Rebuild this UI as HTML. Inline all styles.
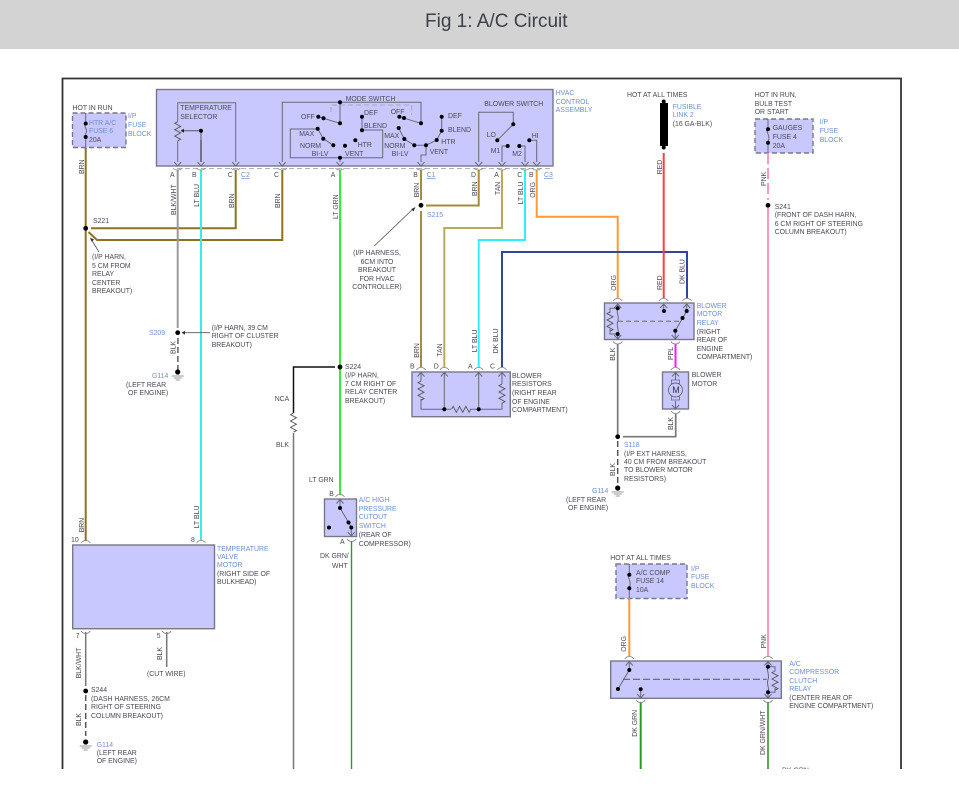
<!DOCTYPE html>
<html><head><meta charset="utf-8"><title>Fig 1: A/C Circuit</title>
<style>
html,body{margin:0;padding:0;background:#fff;width:959px;height:795px;overflow:hidden}
svg{display:block;position:absolute;left:0;top:0}
text{font-family:"Liberation Sans",sans-serif;font-size:6.9px;fill:#4a4a5a}
.b{fill:#6f8fd0}
.t{font-size:19px;fill:#3c4048}
.u{text-decoration:underline}
.box{fill:#c8c8ff;stroke:#77778a;stroke-width:1.4}
.dbox{fill:#c8c8ff;stroke:#77778a;stroke-width:1.4;stroke-dasharray:5 3}
.w{fill:none;stroke-width:2}
.in{fill:none;stroke:#68687a;stroke-width:1}
.cap{fill:none;stroke:#808088;stroke-width:.8}
.thin{fill:none;stroke:#555;stroke-width:.8}
</style></head><body>
<svg width="959" height="795" viewBox="0 0 959 795" xmlns="http://www.w3.org/2000/svg">
<defs>
<g id="cd"><path d="M-4.5 168Q-3.5 170 0 170Q3.5 170 4.5 168" class="cap"/></g>
<g id="cu"><path d="M-4.5 3Q-3 .5 0 .5Q3 .5 4.5 3" class="cap"/></g>
<g id="cb"><path d="M-4.5 0Q-3 2.5 0 2.5Q3 2.5 4.5 0" class="cap"/></g>
<g id="ad"><path d="M-3.5 -4L0 0L3.5 -4" class="in"/></g>
<g id="au"><path d="M-3.5 4L0 0L3.5 4" class="in"/></g>
<path id="zv" d="M0 0l-3 1.6 6 3.2-6 3.2 6 3.2-6 3.2 6 3.2-3 1.6" fill="none" stroke="#555" stroke-width=".9"/>
<path id="zh" d="M0 0l1.6-3 3.2 6 3.2-6 3.2 6 3.2-6 3.2 6 1.6-3" fill="none" stroke="#555" stroke-width=".9"/>
<circle id="d" r="2" fill="#000"/>
<g id="gnd"><circle r="2.6" fill="#000"/><path d="M-6 4H6M-4 6H4M-2 8H2" stroke="#777" stroke-width=".8"/></g>
</defs>

<rect x="0" y="0" width="959" height="49" fill="#d3d3d3"/>
<text x="425" y="27" class="t">Fig 1: A/C Circuit</text>

<path d="M62.5 769V78.5H901V769" fill="none" stroke="#333" stroke-width="1.8"/>

<!-- boxes -->
<rect x="156.5" y="89.5" width="396.5" height="76.5" class="box"/>
<rect x="72.5" y="113" width="53.5" height="34.5" class="dbox"/>
<rect x="755" y="119" width="58" height="34" class="dbox"/>
<rect x="616" y="564" width="71" height="34.5" class="dbox"/>
<rect x="604.5" y="303" width="89.5" height="36.5" class="box"/>
<rect x="662.5" y="372" width="26" height="37" class="box"/>
<rect x="412" y="372" width="98.3" height="44.7" class="box"/>
<rect x="324.5" y="499" width="32" height="37.5" class="box"/>
<rect x="72.7" y="545" width="141.8" height="83.7" class="box"/>
<rect x="610.7" y="661" width="170.6" height="37.3" class="box"/>

<!-- wires -->
<g class="w">
<path d="M85.7 147.5V541" stroke="#8f7120" fill="none" stroke-width="2"/>
<path d="M91 228.3H235.7V170" stroke="#8f7120" fill="none" stroke-width="2"/>
<path d="M88.5 232L97 240H282.3V170" stroke="#8f7120" fill="none" stroke-width="2"/>
<path d="M177.7 170V328" stroke="#9a9a9a" fill="none" stroke-width="2"/>
<path d="M177.9 338V370" stroke="#555" fill="none" stroke-width="1.4" stroke-dasharray="6 3"/>
<path d="M201 170V540" stroke="#33eeee" fill="none" stroke-width="2"/>
<path d="M340 170V495" stroke="#33ee33" fill="none" stroke-width="2"/>
<path d="M335 367H293.5V413" stroke="#111" fill="none" stroke-width="1.5"/>
<path d="M293.5 433V769" stroke="#777" fill="none" stroke-width="1.5"/>
<path d="M351.5 541V769" stroke="#2a9a2a" fill="none" stroke-width="1.4"/>
<path d="M421 170V200M421 211V367" stroke="#a58c3c" fill="none" stroke-width="2"/>
<path d="M426 205.5H478.7V170" stroke="#a58c3c" fill="none" stroke-width="2"/>
<path d="M502 170V228H444.3V367" stroke="#b8a860" fill="none" stroke-width="2"/>
<path d="M525 170V240H478.7V367" stroke="#33eeff" fill="none" stroke-width="2"/>
<path d="M536.7 170V216.7H617.7V298" stroke="#ff9933" fill="none" stroke-width="2"/>
<path d="M502 367V252H687V298" stroke="#33459a" fill="none" stroke-width="2"/>
<path d="M663.7 153V298" stroke="#ff4040" fill="none" stroke-width="2"/>
<path d="M768 153V200" stroke="#ff99bb" fill="none" stroke-width="2" stroke-dasharray="11 4"/>
<path d="M768 208V656" stroke="#ff99bb" fill="none" stroke-width="2"/>
<path d="M617.7 344V434" stroke="#777" fill="none" stroke-width="1.7"/>
<path d="M617.7 441V486" stroke="#555" fill="none" stroke-width="1.5" stroke-dasharray="6 3"/>
<path d="M623 436.7H675.7V414" stroke="#777" fill="none" stroke-width="1.7"/>
<path d="M675.5 344V367" stroke="#ee22ee" fill="none" stroke-width="2"/>
<path d="M629.3 598.5V656" stroke="#ff9933" fill="none" stroke-width="2"/>
<path d="M640.7 702V769" stroke="#2a9a2a" fill="none" stroke-width="2"/>
<path d="M768 702V769" stroke="#2a9a2a" fill="none" stroke-width="1.6"/>
<path d="M85.7 632V686" stroke="#777" fill="none" stroke-width="1.5"/>
<path d="M85.7 695V736" stroke="#555" fill="none" stroke-width="1.5" stroke-dasharray="6 3"/>
<path d="M166.7 632V667" stroke="#777" fill="none" stroke-width="1.5"/>
</g>
<use href="#zv" x="293.5" y="413"/>
<rect x="660" y="103" width="8" height="43" fill="#000"/>
<use href="#d" x="663.7" y="101.5"/><use href="#d" x="663.7" y="147.5"/>

<!-- splices -->
<circle cx="85.7" cy="228.3" r="2.4" fill="#000"/>
<circle cx="421" cy="205.3" r="2.4" fill="#000"/>
<circle cx="768" cy="205.3" r="2.4" fill="#000"/>
<circle cx="177.7" cy="332.7" r="2.4" fill="#000"/>
<circle cx="340" cy="367" r="2.4" fill="#000"/>
<circle cx="617.7" cy="436.7" r="2.4" fill="#000"/>
<circle cx="85.7" cy="691" r="2.4" fill="#000"/>
<use href="#gnd" x="177.7" y="372"/>
<use href="#gnd" x="617.7" y="488"/>
<use href="#gnd" x="85.7" y="742"/>

<!-- leader arrows -->
<path d="M99 252L91 239" class="thin"/><path d="M90 237.5l4.2 2.2-2.8 1.8z" fill="#333"/>
<path d="M374.3 246L414 208" class="thin"/><path d="M415.5 207l-2 4.5-2.3-2.4z" fill="#333"/>
<path d="M210 332.7H184" class="thin"/><path d="M181.5 332.7l3.5-2v4z" fill="#333"/>

<!-- connector row -->
<path d="M177 168.5H553" stroke="#999" stroke-width=".8" stroke-dasharray="5 3" fill="none"/>
<g>
<use href="#cd" x="177.7"/><use href="#cd" x="201"/><use href="#cd" x="235.7"/><use href="#cd" x="282.3"/><use href="#cd" x="340"/><use href="#cd" x="421"/><use href="#cd" x="478.7"/><use href="#cd" x="502"/><use href="#cd" x="525"/><use href="#cd" x="536.7"/>
<use href="#ad" x="177.7" y="166"/><use href="#ad" x="201" y="166"/><use href="#ad" x="235.7" y="166"/><use href="#ad" x="282.3" y="166"/><use href="#ad" x="340" y="166"/><use href="#ad" x="421" y="166"/><use href="#ad" x="478.7" y="166"/><use href="#ad" x="502" y="166"/><use href="#ad" x="525" y="166"/><use href="#ad" x="536.7" y="166"/>
<!-- top caps -->
<use href="#cu" x="85.7" y="540"/><use href="#cu" x="201" y="540"/><use href="#cu" x="340" y="494"/>
<use href="#cu" x="421" y="367"/><use href="#cu" x="444.3" y="367"/><use href="#cu" x="478.7" y="367"/><use href="#cu" x="502" y="367"/>
<use href="#cu" x="617.7" y="298"/><use href="#cu" x="663.7" y="298"/><use href="#cu" x="687" y="298"/>
<use href="#cu" x="675.5" y="367"/><use href="#cu" x="629.3" y="656"/><use href="#cu" x="768" y="656"/>
<!-- bottom caps -->
<use href="#cb" x="85.7" y="631"/><use href="#cb" x="166.7" y="631"/><use href="#cb" x="351.5" y="539"/>
<use href="#cb" x="617.7" y="341.5"/><use href="#cb" x="675.5" y="341.5"/><use href="#cb" x="675.7" y="411"/>
<use href="#cb" x="640.7" y="700"/><use href="#cb" x="768" y="700"/>
</g>

<!-- HVAC internals -->
<path d="M177.7 162V140.7M177.7 121.7V102.7H235.7V162" stroke="#6c6c80" fill="none" stroke-width="1"/>
<use href="#zv" x="177.7" y="121.7"/>
<path d="M201 162V130.7H183" stroke="#55556a" fill="none" stroke-width="1"/><path d="M201 140V162" stroke="#55556a" stroke-width="1.5"/>
<path d="M180.5 130.7l3.5-2v4z" fill="#222"/><use href="#d" x="201" y="130.7"/>

<path d="M282.3 162V102.3H421V123.3L399.3 116.7" class="in"/>
<path d="M340 102.3V123.3L318.3 116.7" class="in"/>
<path d="M331 112V105H411.7V115" stroke="#9a9ab0" stroke-width=".8" stroke-dasharray="5 3" fill="none"/>
<path d="M318.3 129H290.3V157.7H382.7V130H362V116.7" class="in"/>
<path d="M340 157.7V162" class="in"/>
<path d="M317.7 128.7L323.3 138.7L333.3 145.3" class="in"/>
<path d="M398.7 128L404.3 139L414.3 145.3H426L436.7 140L441.7 130.7V116.7" class="in"/>
<path d="M426 145.3V155H421V162" class="in"/>
<g fill="#000">
<use href="#d" x="340" y="102.3"/><use href="#d" x="340" y="123.3"/><use href="#d" x="318.3" y="116.7"/><use href="#d" x="323.5" y="118.3"/>
<use href="#d" x="317.7" y="128.7"/><use href="#d" x="323.3" y="138.7"/><use href="#d" x="333.3" y="145.3"/><use href="#d" x="345" y="145.7"/><use href="#d" x="355.3" y="140.3"/><use href="#d" x="340" y="157.7"/>
<use href="#d" x="362" y="116.7"/><use href="#d" x="362" y="130.3"/>
<use href="#d" x="399.3" y="116.7"/><use href="#d" x="421" y="123.3"/><use href="#d" x="404" y="118"/>
<use href="#d" x="398.7" y="128"/><use href="#d" x="404.3" y="139"/><use href="#d" x="414.3" y="145.3"/><use href="#d" x="426" y="145.3"/><use href="#d" x="436.7" y="140"/><use href="#d" x="441.7" y="130.7"/><use href="#d" x="441.7" y="116.7"/>
</g>
<path d="M478.7 162V112.3H513.3V124.3L497.3 140.3" class="in"/>
<path d="M507.7 146H502V162M519.3 146H525V162M529.3 140.3H536.7V162" class="in"/>
<use href="#d" x="513.3" y="124.3"/><use href="#d" x="497.3" y="140.3"/><use href="#d" x="507.7" y="146"/><use href="#d" x="519.3" y="146"/><use href="#d" x="529.3" y="140.3"/>

<!-- fuses -->
<path d="M85.7 113V123.5" class="in"/><path d="M85.7 123.5c-3 3 3 6 0 10V147" class="in"/>
<use href="#d" x="85.7" y="123.5"/><use href="#d" x="85.7" y="137"/>
<path d="M768 119V129c-3 3 3 6 0 13V153" class="in"/>
<use href="#d" x="768" y="129.3"/><use href="#d" x="768" y="142.7"/>
<path d="M629.3 564V574.5c-3 3 3 6 0 13V598" class="in"/>
<use href="#d" x="629.3" y="574.7"/><use href="#d" x="629.3" y="588.3"/>

<!-- blower relay -->
<path d="M617.7 303V308.3c-2 4 2 8 0 13s2 8 0 12.7V340" class="in"/>
<path d="M617.7 308.3H610V313M610 329V334H617.7" class="in"/>
<use href="#zv" x="610" y="312"/>
<use href="#d" x="617.7" y="308.3"/><use href="#d" x="617.7" y="334"/>
<path d="M618 321.3H680" stroke="#68687a" stroke-width="1" stroke-dasharray="5 3" fill="none"/>
<path d="M663.7 304V311M686.7 304V311L675.3 330.7V339" class="in"/>
<use href="#d" x="664" y="311"/><use href="#d" x="686.7" y="311"/><use href="#d" x="682.5" y="318"/><use href="#d" x="675.3" y="330.7"/>
<use href="#au" x="617.7" y="304"/><use href="#au" x="663.7" y="304"/><use href="#au" x="686.7" y="304"/><use href="#ad" x="617.7" y="339"/><use href="#ad" x="675.3" y="339"/>

<!-- blower motor -->
<path d="M675.5 372V380M675.5 401V409" class="in"/>
<rect x="671.5" y="380" width="8" height="3.5" fill="none" stroke="#68687a" stroke-width=".8"/>
<rect x="671.5" y="396.5" width="8" height="3.5" fill="none" stroke="#68687a" stroke-width=".8"/>
<circle cx="675.5" cy="390" r="7" fill="#c8c8ff" stroke="#68687a" stroke-width=".9"/>
<use href="#au" x="675.5" y="372.5"/><use href="#ad" x="675.5" y="409"/>
<text x="672.2" y="393" style="font-size:9px;fill:#334">M</text>

<!-- resistors -->
<path d="M421 372V381M421 399V409.3H444.3M444.3 372V409.3M451 409.3H444.3M470 409.3H502V402.7M502 372V384M478.7 372V409.3" class="in"/>
<use href="#zv" x="421" y="381"/><use href="#zv" x="502" y="384"/><use href="#zh" x="451.5" y="409.3"/>
<use href="#d" x="444.3" y="409.3"/><use href="#d" x="478.7" y="409.3"/>
<use href="#au" x="421" y="372.5"/><use href="#au" x="444.3" y="372.5"/><use href="#au" x="478.7" y="372.5"/><use href="#au" x="502" y="372.5"/>

<!-- high pressure switch -->
<path d="M340 499V508L351.3 527V536M340 499" class="in"/>
<use href="#au" x="340" y="499.5"/><use href="#ad" x="351.3" y="536"/>
<use href="#d" x="340" y="508"/><use href="#d" x="348.5" y="522.5"/><use href="#d" x="351.3" y="527.5"/><use href="#d" x="329" y="527.5"/>

<!-- compressor relay -->
<path d="M629.3 661.5V670L618 689" class="in"/>
<use href="#au" x="629.3" y="661.5"/>
<use href="#d" x="629.3" y="670"/><use href="#d" x="618" y="689"/>
<path d="M640.7 689.3V698" class="in"/><use href="#ad" x="640.7" y="698"/><use href="#d" x="640.7" y="689.3"/>
<path d="M623 679.3H766.7" stroke="#555" stroke-width="1" stroke-dasharray="7 3" fill="none"/>
<path d="M768 661.5V666.7c-2 4 2 8 0 13s2 8 0 12.7V698" class="in"/>
<path d="M768 666.7H775V671M775 688V692.3H768" class="in"/>
<use href="#zv" x="775" y="671"/>
<use href="#d" x="768" y="666.7"/><use href="#d" x="768" y="692.3"/>
<use href="#au" x="768" y="661.5"/><use href="#ad" x="768" y="698"/>

<!-- labels: top-left -->
<text x="72.5" y="110">HOT IN RUN</text>
<text x="128" y="118" class="b">I/P</text><text x="128" y="127" class="b">FUSE</text><text x="128" y="136" class="b">BLOCK</text>
<text x="89" y="125" class="b">HTR A/C</text><text x="89" y="133" class="b">FUSE 6</text><text x="89" y="142">20A</text>
<text transform="translate(84 174) rotate(-90)">BRN</text>
<text x="170" y="177">A</text><text x="192" y="177">B</text><text x="227.7" y="177">C</text><text x="241" y="177" class="b u">C2</text><text x="274" y="177">C</text><text x="330.7" y="177">A</text>
<text transform="translate(176 215) rotate(-90)">BLK/WHT</text>
<text transform="translate(199 206.7) rotate(-90)">LT BLU</text>
<text transform="translate(234 208) rotate(-90)">BRN</text>
<text transform="translate(280 208) rotate(-90)">BRN</text>
<text transform="translate(338 219) rotate(-90)">LT GRN</text>
<text x="93" y="223">S221</text>
<text x="92" y="259">(I/P HARN,</text><text x="92" y="268">5 CM FROM</text><text x="92" y="276">RELAY</text><text x="92" y="285">CENTER</text><text x="92" y="293">BREAKOUT)</text>

<!-- HVAC labels -->
<text x="180.3" y="110">TEMPERATURE</text><text x="180.3" y="119">SELECTOR</text>
<text x="345.7" y="101">MODE SWITCH</text>
<text x="301" y="119">OFF</text><text x="299.3" y="136">MAX</text><text x="300" y="148">NORM</text><text x="311.7" y="156">BI-LV</text><text x="345" y="156">VENT</text><text x="357.7" y="147">HTR</text><text x="364" y="128">BLEND</text><text x="364" y="115">DEF</text>
<text x="390.7" y="114">OFF</text><text x="384.3" y="138">MAX</text><text x="384.3" y="148">NORM</text><text x="391.7" y="156">BI-LV</text>
<text x="448" y="118">DEF</text><text x="448" y="132">BLEND</text><text x="441.3" y="144">HTR</text><text x="429.7" y="154">VENT</text>
<text x="484.3" y="106">BLOWER SWITCH</text>
<text x="486.7" y="137">LO</text><text x="490.7" y="153">M1</text><text x="512.3" y="156">M2</text><text x="531.7" y="138">HI</text>
<text x="555.7" y="95" class="b">HVAC</text><text x="555.7" y="104" class="b">CONTROL</text><text x="555.7" y="112" class="b">ASSEMBLY</text>

<text x="413.3" y="177">B</text><text x="426.7" y="177" class="b u">C1</text><text x="471" y="177">D</text><text x="494.3" y="177">A</text><text x="517.3" y="177">C</text><text x="529" y="177">B</text><text x="544" y="177" class="b u">C3</text>
<text transform="translate(419 197.3) rotate(-90)">BRN</text>
<text transform="translate(477 196) rotate(-90)">BRN</text>
<text transform="translate(500 195) rotate(-90)">TAN</text>
<text transform="translate(523 204.3) rotate(-90)">LT BLU</text>
<text transform="translate(535 197.7) rotate(-90)">ORG</text>
<text transform="translate(616 290.7) rotate(-90)">ORG</text>
<text x="427" y="217" class="b">S215</text>
<g text-anchor="middle"><text x="377" y="255">(I/P HARNESS,</text><text x="377" y="264">6CM INTO</text><text x="377" y="272">BREAKOUT</text><text x="377" y="281">FOR HVAC</text><text x="377" y="289">CONTROLLER)</text></g>

<!-- top-right -->
<text x="627" y="97">HOT AT ALL TIMES</text>
<text x="672.7" y="109" class="b">FUSIBLE</text><text x="672.7" y="117" class="b">LINK 2</text><text x="672.7" y="126">(16 GA-BLK)</text>
<text transform="translate(662 174.3) rotate(-90)">RED</text>
<text transform="translate(662 290) rotate(-90)">RED</text>
<text transform="translate(684.5 284) rotate(-90)">DK BLU</text>
<text x="754.7" y="97">HOT IN RUN,</text><text x="754.7" y="106">BULB TEST</text><text x="754.7" y="114">OR START</text>
<text x="772.7" y="130">GAUGES</text><text x="772.7" y="139">FUSE 4</text><text x="772.7" y="148">20A</text>
<text x="819.7" y="124" class="b">I/P</text><text x="819.7" y="133" class="b">FUSE</text><text x="819.7" y="142" class="b">BLOCK</text>
<text transform="translate(766 186) rotate(-90)">PNK</text>
<text x="774.7" y="209">S241</text><text x="774.7" y="217">(FRONT OF DASH HARN,</text><text x="774.7" y="226">6 CM RIGHT OF STEERING</text><text x="774.7" y="234">COLUMN BREAKOUT)</text>

<text x="696.7" y="308" class="b">BLOWER</text><text x="696.7" y="316" class="b">MOTOR</text><text x="696.7" y="325" class="b">RELAY</text><text x="696.7" y="334">(RIGHT</text><text x="696.7" y="342">REAR OF</text><text x="696.7" y="351">ENGINE</text><text x="696.7" y="359">COMPARTMENT)</text>
<text transform="translate(615 360.7) rotate(-90)">BLK</text>
<text transform="translate(673 360) rotate(-90)">PPL</text>
<text transform="translate(673 430) rotate(-90)">BLK</text>
<text transform="translate(615 476) rotate(-90)">BLK</text>
<text x="691.7" y="377">BLOWER</text><text x="691.7" y="386">MOTOR</text>
<text x="624" y="447" class="b">S118</text><text x="624" y="456">(I/P EXT HARNESS,</text><text x="624" y="464">40 CM FROM BREAKOUT</text><text x="624" y="472">TO BLOWER MOTOR</text><text x="624" y="481">RESISTORS)</text>
<text x="592" y="493" class="b">G114</text><text x="566" y="502">(LEFT REAR</text><text x="568" y="510">OF ENGINE)</text>

<!-- middle -->
<text x="149" y="335" class="b">S209</text>
<text x="211.7" y="330">(I/P HARN, 39 CM</text><text x="211.7" y="338">RIGHT OF CLUSTER</text><text x="211.7" y="347">BREAKOUT)</text>
<text transform="translate(175.5 354) rotate(-90)">BLK</text>
<text x="152" y="378" class="b">G114</text><text x="126" y="387">(LEFT REAR</text><text x="128" y="395">OF ENGINE)</text>
<text transform="translate(84 532.3) rotate(-90)">BRN</text>
<text transform="translate(199 528.3) rotate(-90)">LT BLU</text>
<text x="71" y="542">10</text><text x="191" y="542">8</text>
<text x="345" y="369">S224</text><text x="345" y="377.5">(I/P HARN,</text><text x="345" y="386">7 CM RIGHT OF</text><text x="345" y="394">RELAY CENTER</text><text x="345" y="403">BREAKOUT)</text>
<text x="274.7" y="401">NCA</text><text x="276" y="447">BLK</text><text x="309" y="482">LT GRN</text>
<text x="329.3" y="496">B</text><text x="340" y="544">A</text>
<text x="320" y="558">DK GRN/</text><text x="332" y="568">WHT</text>
<text x="358.7" y="502" class="b">A/C HIGH</text><text x="358.7" y="511" class="b">PRESSURE</text><text x="358.7" y="519" class="b">CUTOUT</text><text x="358.7" y="528" class="b">SWITCH</text><text x="358.7" y="537">(REAR OF</text><text x="358.7" y="546">COMPRESSOR)</text>

<text transform="translate(419 357.7) rotate(-90)">BRN</text>
<text transform="translate(442 356.7) rotate(-90)">TAN</text>
<text transform="translate(477 352.3) rotate(-90)">LT BLU</text>
<text transform="translate(498 353.3) rotate(-90)">DK BLU</text>
<text x="410" y="368.5">B</text><text x="433.7" y="368.5">D</text><text x="468" y="368.5">A</text><text x="490" y="368.5">C</text>
<text x="512" y="378">BLOWER</text><text x="512" y="386">RESISTORS</text><text x="512" y="395">(RIGHT REAR</text><text x="512" y="404">OF ENGINE</text><text x="512" y="412">COMPARTMENT)</text>

<!-- bottom-left -->
<text x="217" y="551" class="b">TEMPERATURE</text><text x="217" y="559" class="b">VALVE</text><text x="217" y="567" class="b">MOTOR</text><text x="217" y="576">(RIGHT SIDE OF</text><text x="217" y="584">BULKHEAD)</text>
<text x="75.7" y="638">7</text><text x="156.7" y="638">5</text>
<text transform="translate(81 678.3) rotate(-90)">BLK/WHT</text>
<text transform="translate(162 660) rotate(-90)">BLK</text>
<text x="147" y="676">(CUT WIRE)</text>
<text x="91" y="692">S244</text><text x="91" y="701">(DASH HARNESS, 26CM</text><text x="91" y="709">RIGHT OF STEERING</text><text x="91" y="718">COLUMN BREAKOUT)</text>
<text transform="translate(81 726) rotate(-90)">BLK</text>
<text x="96.7" y="747" class="b">G114</text><text x="96.7" y="755">(LEFT REAR</text><text x="96.7" y="763">OF ENGINE)</text>

<!-- bottom-right -->
<text x="610.3" y="560">HOT AT ALL TIMES</text>
<text x="636" y="575">A/C COMP</text><text x="636" y="583">FUSE 14</text><text x="636" y="592">10A</text>
<text x="691" y="571" class="b">I/P</text><text x="691" y="579" class="b">FUSE</text><text x="691" y="588" class="b">BLOCK</text>
<text transform="translate(626 651.7) rotate(-90)">ORG</text>
<text transform="translate(766 648.3) rotate(-90)">PNK</text>
<text transform="translate(637 736.7) rotate(-90)">DK GRN</text>
<text transform="translate(765 755) rotate(-90)">DK GRN/WHT</text>
<text x="789.3" y="666" class="b">A/C</text><text x="789.3" y="674" class="b">COMPRESSOR</text><text x="789.3" y="683" class="b">CLUTCH</text><text x="789.3" y="691" class="b">RELAY</text><text x="789.3" y="700">(CENTER REAR OF</text><text x="789.3" y="708">ENGINE COMPARTMENT)</text>
<text x="782" y="772.5">DK GRN</text>

<rect x="0" y="769" width="959" height="26" fill="#fff"/>
</svg>
</body></html>
